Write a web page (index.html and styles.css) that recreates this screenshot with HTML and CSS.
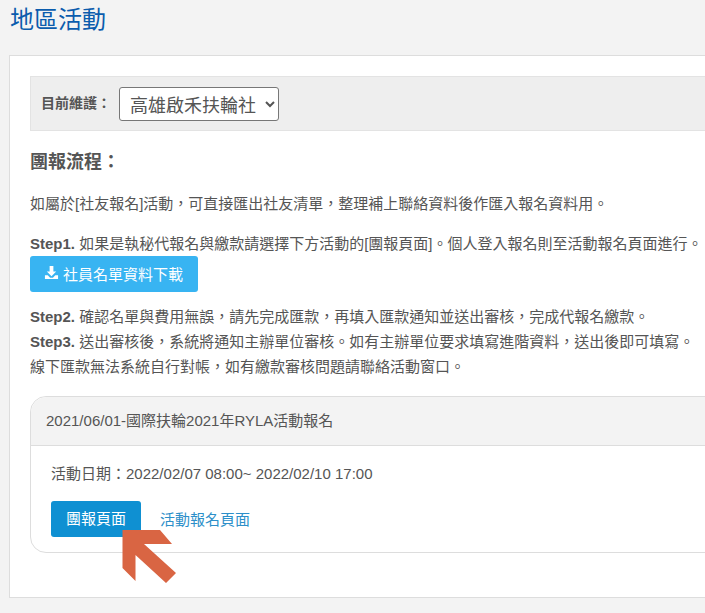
FILE: index.html
```html
<!DOCTYPE html>
<html lang="zh-Hant">
<head>
<meta charset="utf-8">
<title>地區活動</title>
<link rel="stylesheet" href="styles.css">
</head>
<body>
<h1 class="page-title">地區活動</h1>
<main class="panel">
  <div class="club-bar">
    <label class="club-label" for="club">目前維護：</label>
    <select class="club-select" id="club"><option>高雄啟禾扶輪社</option></select>
  </div>
  <h2 class="flow-title">團報流程：</h2>
  <p class="para">如屬於[社友報名]活動，可直接匯出社友清單，整理補上聯絡資料後作匯入報名資料用。</p>
  <div class="para para-tight">
    <div><b>Step1.</b> 如果是執秘代報名與繳款請選擇下方活動的[團報頁面]。個人登入報名則至活動報名頁面進行。</div>
    <a class="btn-download" href="#">
      <svg class="dl-icon" viewBox="0 0 16 16" aria-hidden="true"><path d="M6 1h4v6h3l-5 5-5-5h3z"/><path d="M1 11h3l2.500 2.500h3L12 11h3v4H1z"/></svg>
      社員名單資料下載
    </a>
  </div>
  <div class="para para-last">
    <div><b>Step2.</b> 確認名單與費用無誤，請先完成匯款，再填入匯款通知並送出審核，完成代報名繳款。</div>
    <div><b>Step3.</b> 送出審核後，系統將通知主辦單位審核。如有主辦單位要求填寫進階資料，送出後即可填寫。</div>
    <div>線下匯款無法系統自行對帳，如有繳款審核問題請聯絡活動窗口。</div>
  </div>
  <section class="card">
    <header class="card-head">2021/06/01-國際扶輪2021年RYLA活動報名</header>
    <div class="card-body">
      <p class="date">活動日期：2022/02/07 08:00~ 2022/02/10 17:00</p>
      <div class="actions">
        <a class="btn-group" href="#">團報頁面</a>
        <a class="link" href="#">活動報名頁面</a>
      </div>
      <svg class="arrow" viewBox="0 0 56 56" aria-hidden="true"><path d="M0.500 0H38L50 14H22L54 43 44 53 13.500 25V51L0.500 38z"/></svg>
    </div>
  </section>
</main>
</body>
</html>
```
FILE: styles.css
```css
* { box-sizing: border-box; }
html, body { margin: 0; height: 613px; overflow: hidden; }
body {
  background: #f3f3f3;
  color: #555;
  font-family: "Liberation Sans", "Noto Sans CJK TC", sans-serif;
  font-size: 15px;
  line-height: 25px;
  padding: 5px 0 0 10px;
}
.page-title {
  margin: 0;
  font-size: 24px;
  font-weight: 400;
  line-height: 30px;
  color: #0b5cad;
}
.panel {
  width: 900px;
  height: 543px;
  margin: 20px 0 0 -1px;
  padding: 20px;
  background: #fff;
  border: 1px solid #ddd;
}
.club-bar {
  display: flex;
  align-items: center;
  gap: 8px;
  height: 55px;
  padding-left: 10px;
  background: #eee;
  border: 1px solid #e3e3e3;
}
.club-label { font-size: 14px; font-weight: 700; }
.club-select {
  width: 160px;
  height: 34px;
  padding: 0 6px;
  background: #fff;
  border: 1px solid #777;
  border-radius: 3px;
  color: #555;
  font: 18px "Noto Sans CJK TC", sans-serif;
}
.flow-title {
  margin: 19px 0 17px;
  font-size: 18px;
  line-height: 24px;
  font-weight: 700;
}
.para { margin: 0 0 15px; }
.para-tight { margin-bottom: 12px; }
.para-last { margin-bottom: 0; }
.btn-download {
  display: flex;
  width: 168px;
  align-items: center;
  gap: 4px;
  height: 36px;
  padding: 0 14px;
  background: #38b4f2;
  border-radius: 3px;
  color: #fff;
  text-decoration: none;
}
.dl-icon { width: 15px; height: 15px; margin-bottom: 4px; fill: #fff; }
.card {
  width: 860px;
  margin-top: 17px;
  background: #fff;
  border: 1px solid #ddd;
  border-radius: 16px;
}
.card-head {
  height: 49px;
  padding: 0 15px;
  background: #f3f3f3;
  border-bottom: 1px solid #ddd;
  border-radius: 16px 16px 0 0;
  line-height: 48px;
}
.card-body { position: relative; padding: 15px 20px 15px; }
.date { margin: 0 0 15px; }
.actions { display: flex; align-items: center; gap: 19px; }
.btn-group {
  display: block;
  width: 90px;
  height: 36px;
  background: #0f90d2;
  border-radius: 3px;
  color: #fff;
  text-align: center;
  line-height: 36px;
  text-decoration: none;
}
.link { color: #2d8fc9; text-decoration: none; }
.arrow {
  position: absolute;
  left: 91px;
  top: 84px;
  width: 56px;
  height: 56px;
  fill: #d96543;
}
```
